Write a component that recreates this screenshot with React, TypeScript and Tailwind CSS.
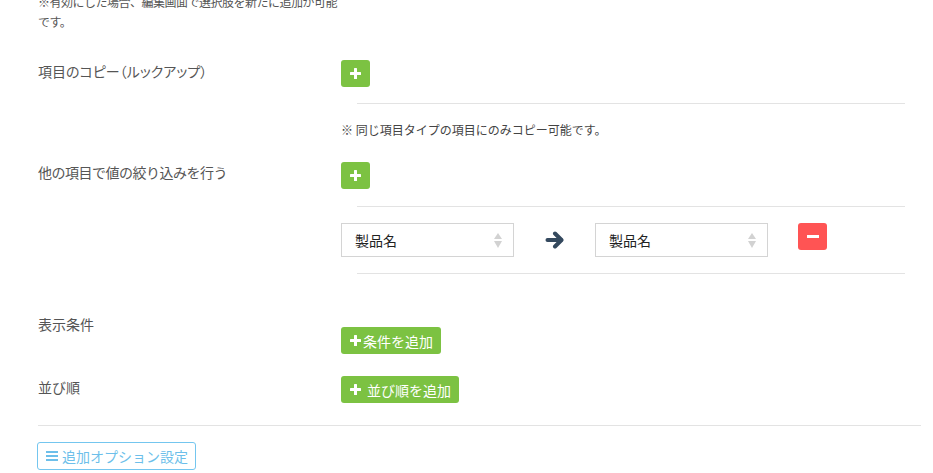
import React from 'react'

const font = "font-['Noto_Sans_CJK_JP','Noto_Sans',sans-serif]"

function PlusIcon() {
  return (
    <svg width="11" height="11" viewBox="0 0 11 11" fill="#fff">
      <rect x="4" y="0" width="3" height="11" rx="0.5" />
      <rect x="0" y="4" width="11" height="3" rx="0.5" />
    </svg>
  )
}

function PlusButton() {
  return (
    <button className="w-[29px] h-[27px] rounded-[3px] bg-[#7cc242] flex items-center justify-center">
      <PlusIcon />
    </button>
  )
}

function AddButton({ label, spaced }: { label: string; spaced?: boolean }) {
  return (
    <button
      className={`h-[27px] rounded-[3px] bg-[#7cc242] flex items-center pl-[9px] pr-[8px] text-white text-[14px] leading-none ${
        spaced ? 'gap-[6px]' : 'gap-[2px]'
      }`}
    >
      <PlusIcon />
      <span>{label}</span>
    </button>
  )
}

function SelectBox() {
  return (
    <div className="w-[173px] h-[34px] border border-[#d4d4d4] bg-white flex items-center justify-between pl-[13px] pr-[11px]">
      <span className="text-[14px] text-[#222]">製品名</span>
      <svg width="8" height="15" viewBox="0 0 8 15" fill="#d2d2d2">
        <path d="M4 0 L8 6 L0 6 Z" />
        <path d="M0 8 L8 8 L4 15 Z" />
      </svg>
    </div>
  )
}

export default function App() {
  return (
    <div className={`${font} bg-white w-[933px] h-[473px] overflow-hidden pl-[38px] pr-[12px] text-[#555]`}>
      {/* note under previous field */}
      <div className="-mt-[8px] w-[303px] text-[12px] leading-[20px] tracking-[-0.5px] text-[#555]">
        ※有効にした場合、編集画面で選択肢を新たに追加が可能です。
      </div>

      {/* copy (lookup) */}
      <div className="flex items-start mt-[28px]">
        <div className="w-[303px] shrink-0 pt-[1px] text-[14px] leading-[20px] [font-feature-settings:'palt']">
          項目のコピー（ルックアップ）
        </div>
        <div className="flex-1">
          <PlusButton />
          <div className="mx-[16px] mt-[16px] border-t border-[#e3e3e3]" />
          <div className="mt-[16px] text-[12px] leading-[20px] text-[#444]">
            ※ 同じ項目タイプの項目にのみコピー可能です。
          </div>
        </div>
      </div>

      {/* narrowing */}
      <div className="flex items-start mt-[22px]">
        <div className="w-[303px] shrink-0 text-[14px] leading-[20px] tracking-[-0.5px]">他の項目で値の絞り込みを行う</div>
        <div className="flex-1">
          <PlusButton />
          <div className="mx-[16px] mt-[17px] border-t border-[#e3e3e3]" />
          <div className="mt-[16px] flex items-start">
            <SelectBox />
            <div className="w-[81px] h-[34px] flex items-center justify-center">
              <svg width="20" height="18" viewBox="0 0 20 18" fill="none" stroke="#34495e" strokeWidth="4" strokeLinecap="round" strokeLinejoin="round">
                <path d="M2.5 9 H16" />
                <path d="M10 2.5 L16.5 9 L10 15.5" />
              </svg>
            </div>
            <SelectBox />
            <button className="ml-[30px] w-[29px] h-[27px] rounded-[3px] bg-[#ff5454] flex items-center justify-center">
              <span className="block w-[12px] h-[3px] bg-white" />
            </button>
          </div>
          <div className="mx-[16px] mt-[16px] border-t border-[#e3e3e3]" />
        </div>
      </div>

      {/* display condition */}
      <div className="flex items-start mt-[40px]">
        <div className="w-[303px] shrink-0 text-[14px] leading-[20px]">表示条件</div>
        <div className="flex-1 pt-[13px]">
          <AddButton label="条件を追加" />
        </div>
      </div>

      {/* sort order */}
      <div className="flex items-start mt-[22px]">
        <div className="w-[303px] shrink-0 pt-[1px] text-[14px] leading-[20px]">並び順</div>
        <div className="flex-1">
          <AddButton label="並び順を追加" spaced />
        </div>
      </div>

      <div className="mt-[22px] border-t border-[#e3e3e3]" />

      <button className="mt-[16px] -ml-[1px] h-[28px] pl-[8px] pr-[7px] rounded-[3px] border border-[#74c6ef] text-[#6dbfea] text-[14px] flex items-center gap-[4px]">
        <svg width="12" height="10" viewBox="0 0 12 10" fill="#6dbfea">
          <rect x="0" y="0" width="12" height="2" />
          <rect x="0" y="4" width="12" height="2" />
          <rect x="0" y="8" width="12" height="2" />
        </svg>
        <span>追加オプション設定</span>
      </button>
    </div>
  )
}
